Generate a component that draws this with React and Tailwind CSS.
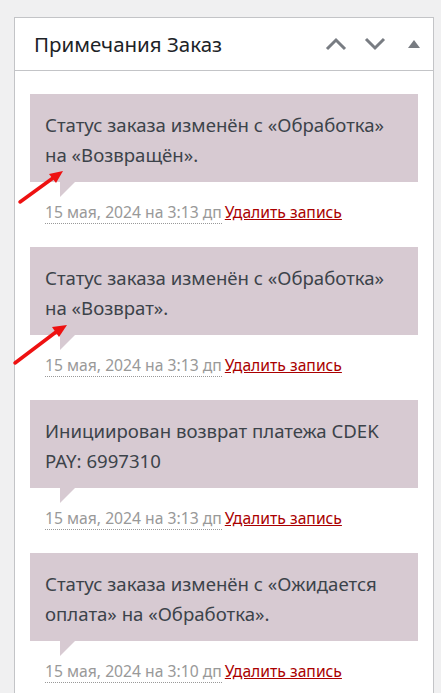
import React from 'react';

const notes = [
  { lines: ['Статус заказа изменён с «Обработка»', 'на «Возвращён».'], date: '15 мая, 2024 на 3:13 дп', arrow: 'a' },
  { lines: ['Статус заказа изменён с «Обработка»', 'на «Возврат».'], date: '15 мая, 2024 на 3:13 дп', arrow: 'b' },
  { lines: ['Инициирован возврат платежа CDEK', 'PAY: 6997310'], date: '15 мая, 2024 на 3:13 дп' },
  { lines: ['Статус заказа изменён с «Ожидается', 'оплата» на «Обработка».'], date: '15 мая, 2024 на 3:10 дп' },
];

function RedArrow({ kind }) {
  if (kind === 'b') {
    return (
      <svg className="absolute left-[-20px] top-[65px]" width="70" height="60" viewBox="0 0 70 60">
        <line x1="5" y1="51" x2="46" y2="20" stroke="#ee1111" strokeWidth="3.5" strokeLinecap="round" />
        <polygon points="57,13 42,15 49,25" fill="#ee1111" />
      </svg>
    );
  }
  return (
    <svg className="absolute left-[-15px] top-[65px]" width="60" height="50" viewBox="0 0 60 50">
      <line x1="5" y1="43" x2="38" y2="19" stroke="#ee1111" strokeWidth="3.5" strokeLinecap="round" />
      <polygon points="48,12 34,15 41,24" fill="#ee1111" />
    </svg>
  );
}

function Note({ note }) {
  return (
    <li className="relative">
      <div className="relative bg-[#d7cad2] px-[15px] pt-[16px] pb-[12px] text-[18.6px] leading-[30px] text-[#3c434a]">
        {note.lines.map((l, i) => (
          <div key={i} className="whitespace-nowrap">{l}</div>
        ))}
        <span className="absolute left-[30px] top-full h-0 w-0 border-t-[15px] border-r-[15px] border-t-[#d7cad2] border-r-transparent" />
      </div>
      <p className="mt-[15px] pl-[15px] text-[15.7px] leading-[30px] whitespace-nowrap">
        <abbr className="text-[#999] no-underline border-b border-dotted border-[#999]">{note.date}</abbr>
        <a className="ml-[3px] text-[#a00] underline">Удалить запись</a>
      </p>
      {note.arrow && <RedArrow kind={note.arrow} />}
    </li>
  );
}

export default function App() {
  return (
    <div className="bg-[#f0f0f1] pl-[14px] pr-[7px] pt-[17px] font-['Noto_Sans',sans-serif] overflow-hidden h-[693px]">
      <div className="bg-white border border-[#c3c4c7] h-[700px]">
        <div className="flex items-center justify-between h-[53px] border-b border-[#c3c4c7] pl-[19px] pr-[13px]">
          <h2 className="text-[20.5px] text-[#1d2327]">Примечания Заказ</h2>
          <div className="flex items-center text-[#787c82]">
            <svg width="22" height="14" viewBox="0 0 22 14">
              <polyline points="2,12 11,3 20,12" fill="none" stroke="#787c82" strokeWidth="3" />
            </svg>
            <svg className="ml-[17px]" width="22" height="14" viewBox="0 0 22 14">
              <polyline points="2,2 11,11 20,2" fill="none" stroke="#787c82" strokeWidth="3" />
            </svg>
            <svg className="ml-[22px]" width="12" height="10" viewBox="0 0 12 10">
              <polygon points="6,1 12,9 0,9" fill="#787c82" />
            </svg>
          </div>
        </div>
        <ul className="pt-[23px] pl-[15px] pr-[15px] flex flex-col gap-[20px]">
          {notes.map((n, i) => (
            <Note key={i} note={n} />
          ))}
        </ul>
      </div>
    </div>
  );
}
